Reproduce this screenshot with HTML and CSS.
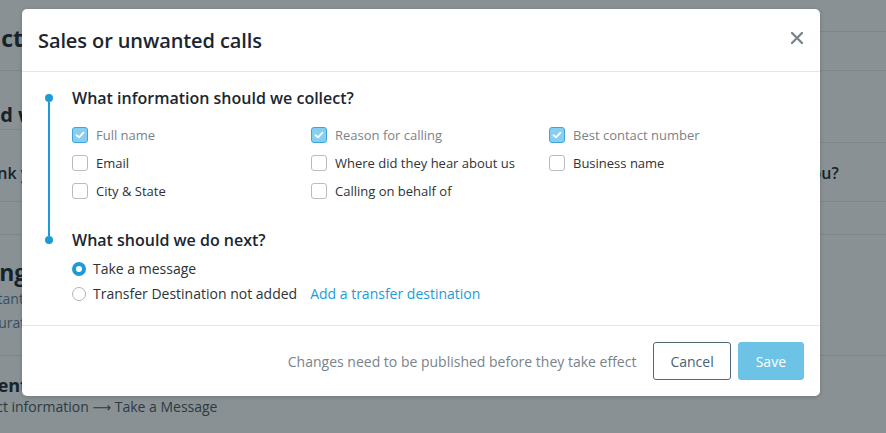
FILE: index.html
```html
<!DOCTYPE html>
<html lang="en">
<head>
<meta charset="utf-8">
<title>Sales or unwanted calls</title>
<link rel="stylesheet" href="styles.css">
</head>
<body>
<div class="page">
  <div class="col-left">
    <div class="blk blk-a"><span class="h-xl off-a">Structure</span></div>
    <div class="blk blk-b"><span class="h-lg off-b">What should we do</span></div>
    <div class="blk blk-c"><span class="q off-c">Do you think you get many sales calls</span></div>
    <div class="blk blk-d"></div>
    <div class="blk blk-e">
      <div class="h-xl off-e">Something</div>
      <div class="sub off-e2">Important details</div>
      <div class="sub off-e3">Accurate answers</div>
    </div>
    <div class="blk blk-f">
      <div class="h-md off-f">Current</div>
      <div class="flow off-f2">Collect information <span class="arrow">⟶</span> Take a Message</div>
    </div>
  </div>
  <div class="col-mid"></div>
  <div class="col-right">
    <div class="rb rb-1"></div>
    <div class="rb rb-2"></div>
    <div class="rb rb-3"></div>
    <div class="rb rb-4"><span class="q off-r">you?</span></div>
    <div class="rb rb-5"></div>
    <div class="rb rb-6"></div>
  </div>
</div>

<div class="modal" role="dialog">
  <div class="modal-header">
    <h1 class="modal-title">Sales or unwanted calls</h1>
    <button class="close" aria-label="Close">
      <svg width="12" height="12" viewBox="0 0 12 12"><path d="M1 1 L11 11 M11 1 L1 11" stroke="#7b858b" stroke-width="2.4" stroke-linecap="round"/></svg>
    </button>
  </div>
  <div class="modal-body">
    <section class="step step-first">
      <div class="rail"><span class="dot"></span><span class="line"></span></div>
      <div class="step-content">
        <h2 class="step-title">What information should we collect?</h2>
        <div class="checks">
          <label class="check is-on"><span class="box"><svg width="10" height="8" viewBox="0 0 10 8"><path d="M1.5 4.2 L4 6.3 L8.5 1.7" fill="none" stroke="#fff" stroke-width="1.8" stroke-linecap="round" stroke-linejoin="round"/></svg></span>Full name</label>
          <label class="check is-on"><span class="box"><svg width="10" height="8" viewBox="0 0 10 8"><path d="M1.5 4.2 L4 6.3 L8.5 1.7" fill="none" stroke="#fff" stroke-width="1.8" stroke-linecap="round" stroke-linejoin="round"/></svg></span>Reason for calling</label>
          <label class="check is-on"><span class="box"><svg width="10" height="8" viewBox="0 0 10 8"><path d="M1.5 4.2 L4 6.3 L8.5 1.7" fill="none" stroke="#fff" stroke-width="1.8" stroke-linecap="round" stroke-linejoin="round"/></svg></span>Best contact number</label>
          <label class="check"><span class="box"></span>Email</label>
          <label class="check"><span class="box"></span>Where did they hear about us</label>
          <label class="check"><span class="box"></span>Business name</label>
          <label class="check"><span class="box"></span>City &amp; State</label>
          <label class="check"><span class="box"></span>Calling on behalf of</label>
        </div>
      </div>
    </section>
    <section class="step">
      <div class="rail"><span class="dot"></span></div>
      <div class="step-content">
        <h2 class="step-title">What should we do next?</h2>
        <div class="radios">
          <label class="radio is-on"><span class="circle"></span>Take a message</label>
          <label class="radio"><span class="circle"></span>Transfer Destination not added<a class="link" href="#">Add a transfer destination</a></label>
        </div>
      </div>
    </section>
  </div>
  <div class="modal-footer">
    <span class="note">Changes need to be published before they take effect</span>
    <button class="btn btn-cancel">Cancel</button>
    <button class="btn btn-save">Save</button>
  </div>
</div>
</body>
</html>
```

FILE: styles.css
```css
* { box-sizing: border-box; }
html, body { margin: 0; padding: 0; }
body {
  width: 886px;
  height: 433px;
  overflow: hidden;
  background: #899194;
  font-family: "Open Sans", "Noto Sans", sans-serif;
  position: relative;
}

/* background page (under the dim overlay) */
.page {
  display: grid;
  grid-template-columns: 440px 1fr 66px;
  height: 433px;
  color: #16232b;
}
.col-left, .col-right { overflow: hidden; white-space: nowrap; }
.blk, .rb { border-bottom: 1px solid #7c8689; }
.blk-a { height: 71px; padding-top: 23px; }
.blk-b { height: 59px; padding-top: 30px; }
.blk-c { height: 72px; padding-top: 32px; }
.blk-d { height: 33px; }
.blk-e { height: 121px; padding-top: 22px; }
.blk-f { border-bottom: 0; padding-top: 17px; }

.rb-1 { height: 32px; }
.rb-2 { height: 39px; }
.rb-3 { height: 72px; }
.rb-4 { height: 59px; padding-top: 19px; }
.rb-5 { height: 33px; }
.rb-6 { height: 121px; }

.h-xl { display: block; font-size: 23px; font-weight: 700; line-height: 30px; }
.h-lg { display: block; font-size: 20px; font-weight: 700; line-height: 28px; }
.h-md { font-size: 18px; font-weight: 700; line-height: 24px; }
.q { display: block; font-size: 16px; font-weight: 600; line-height: 22px; }
.sub { font-size: 14px; line-height: 24px; color: #38505d; }
.flow { font-size: 14px; line-height: 20px; color: #2c3a42; }
.arrow { font-family: "DejaVu Sans", sans-serif; font-size: 13px; }

.off-a { margin-left: -47px; }
.off-b { margin-left: -113px; }
.off-c { margin-left: -82px; }
.off-e { margin-left: -96px; }
.off-e2 { margin-left: -42px; }
.off-e3 { margin-left: -24px; }
.off-f { margin-left: -42px; }
.off-f2 { margin-left: -36px; }
.off-r { margin-left: -17px; }

/* modal */
.modal {
  position: absolute;
  left: 22px;
  top: 9px;
  width: 798px;
  background: #fff;
  border-radius: 5px;
  box-shadow: 0 1px 4px rgba(0,0,0,0.18);
}
.modal-header {
  height: 63px;
  border-bottom: 1px solid #e4e7e9;
  display: flex;
  align-items: center;
  justify-content: space-between;
  padding: 0 16px 0 16px;
}
.modal-title {
  margin: 0;
  font-size: 20px;
  font-weight: 600;
  color: #1b2631;
  letter-spacing: -0.1px;
}
.close {
  border: 0;
  background: none;
  padding: 0;
  width: 12px;
  height: 12px;
  margin-right: 1px;
  margin-bottom: 5px;
  display: flex;
}

.modal-body {
  padding: 15px 16px 19px 23px;
}
.step {
  display: grid;
  grid-template-columns: 8px 1fr;
  column-gap: 19px;
}
.step-first { padding-bottom: 24px; }
.rail {
  display: flex;
  flex-direction: column;
  align-items: center;
  padding-top: 7px;
}
.dot {
  width: 8px;
  height: 8px;
  border-radius: 50%;
  background: #1d9bd7;
  flex: none;
}
.line {
  width: 2px;
  flex: 1;
  background: #1d9bd7;
  margin-bottom: -31px;
}
.step-title {
  margin: 0;
  font-size: 16px;
  font-weight: 600;
  line-height: 22px;
  color: #1b2631;
}
.checks {
  margin-top: 12px;
  display: grid;
  grid-template-columns: 239px 238px 1fr;
  grid-auto-rows: 28px;
}
.check {
  display: flex;
  align-items: center;
  gap: 8px;
  font-size: 13px;
  color: #2c3338;
}
.check.is-on { color: #7a838a; }
.box {
  width: 16px;
  height: 16px;
  border: 1px solid #b7bec3;
  border-radius: 3px;
  display: flex;
  align-items: center;
  justify-content: center;
  flex: none;
}
.is-on .box {
  background: #86cff0;
  border-color: #3da5db;
}

.radios { margin-top: 5px; }
.radio {
  display: flex;
  align-items: center;
  gap: 7px;
  height: 25px;
  font-size: 14px;
  color: #2c3338;
}
.circle {
  width: 14px;
  height: 14px;
  border-radius: 50%;
  border: 1px solid #aeb6bb;
  flex: none;
}
.radio.is-on .circle {
  border: 4.5px solid #1d9bd7;
  background: #fff;
}
.link {
  color: #1d9bd7;
  text-decoration: none;
  margin-left: 6px;
}

.modal-footer {
  border-top: 1px solid #e4e7e9;
  height: 71px;
  padding: 0 16px;
  display: flex;
  align-items: center;
  justify-content: flex-end;
}
.note {
  font-size: 14px;
  color: #7a838a;
  margin-right: 17px;
}
.btn {
  height: 38px;
  border-radius: 3px;
  font-family: inherit;
  font-size: 14px;
  padding: 0 16px;
}
.btn-cancel {
  background: #fff;
  border: 1px solid #4f6878;
  color: #4a6272;
}
.btn-save {
  margin-left: 7px;
  background: #6cc3e6;
  border: 1px solid #6cc3e6;
  color: #fff;
  padding: 0 17px;
}
```
